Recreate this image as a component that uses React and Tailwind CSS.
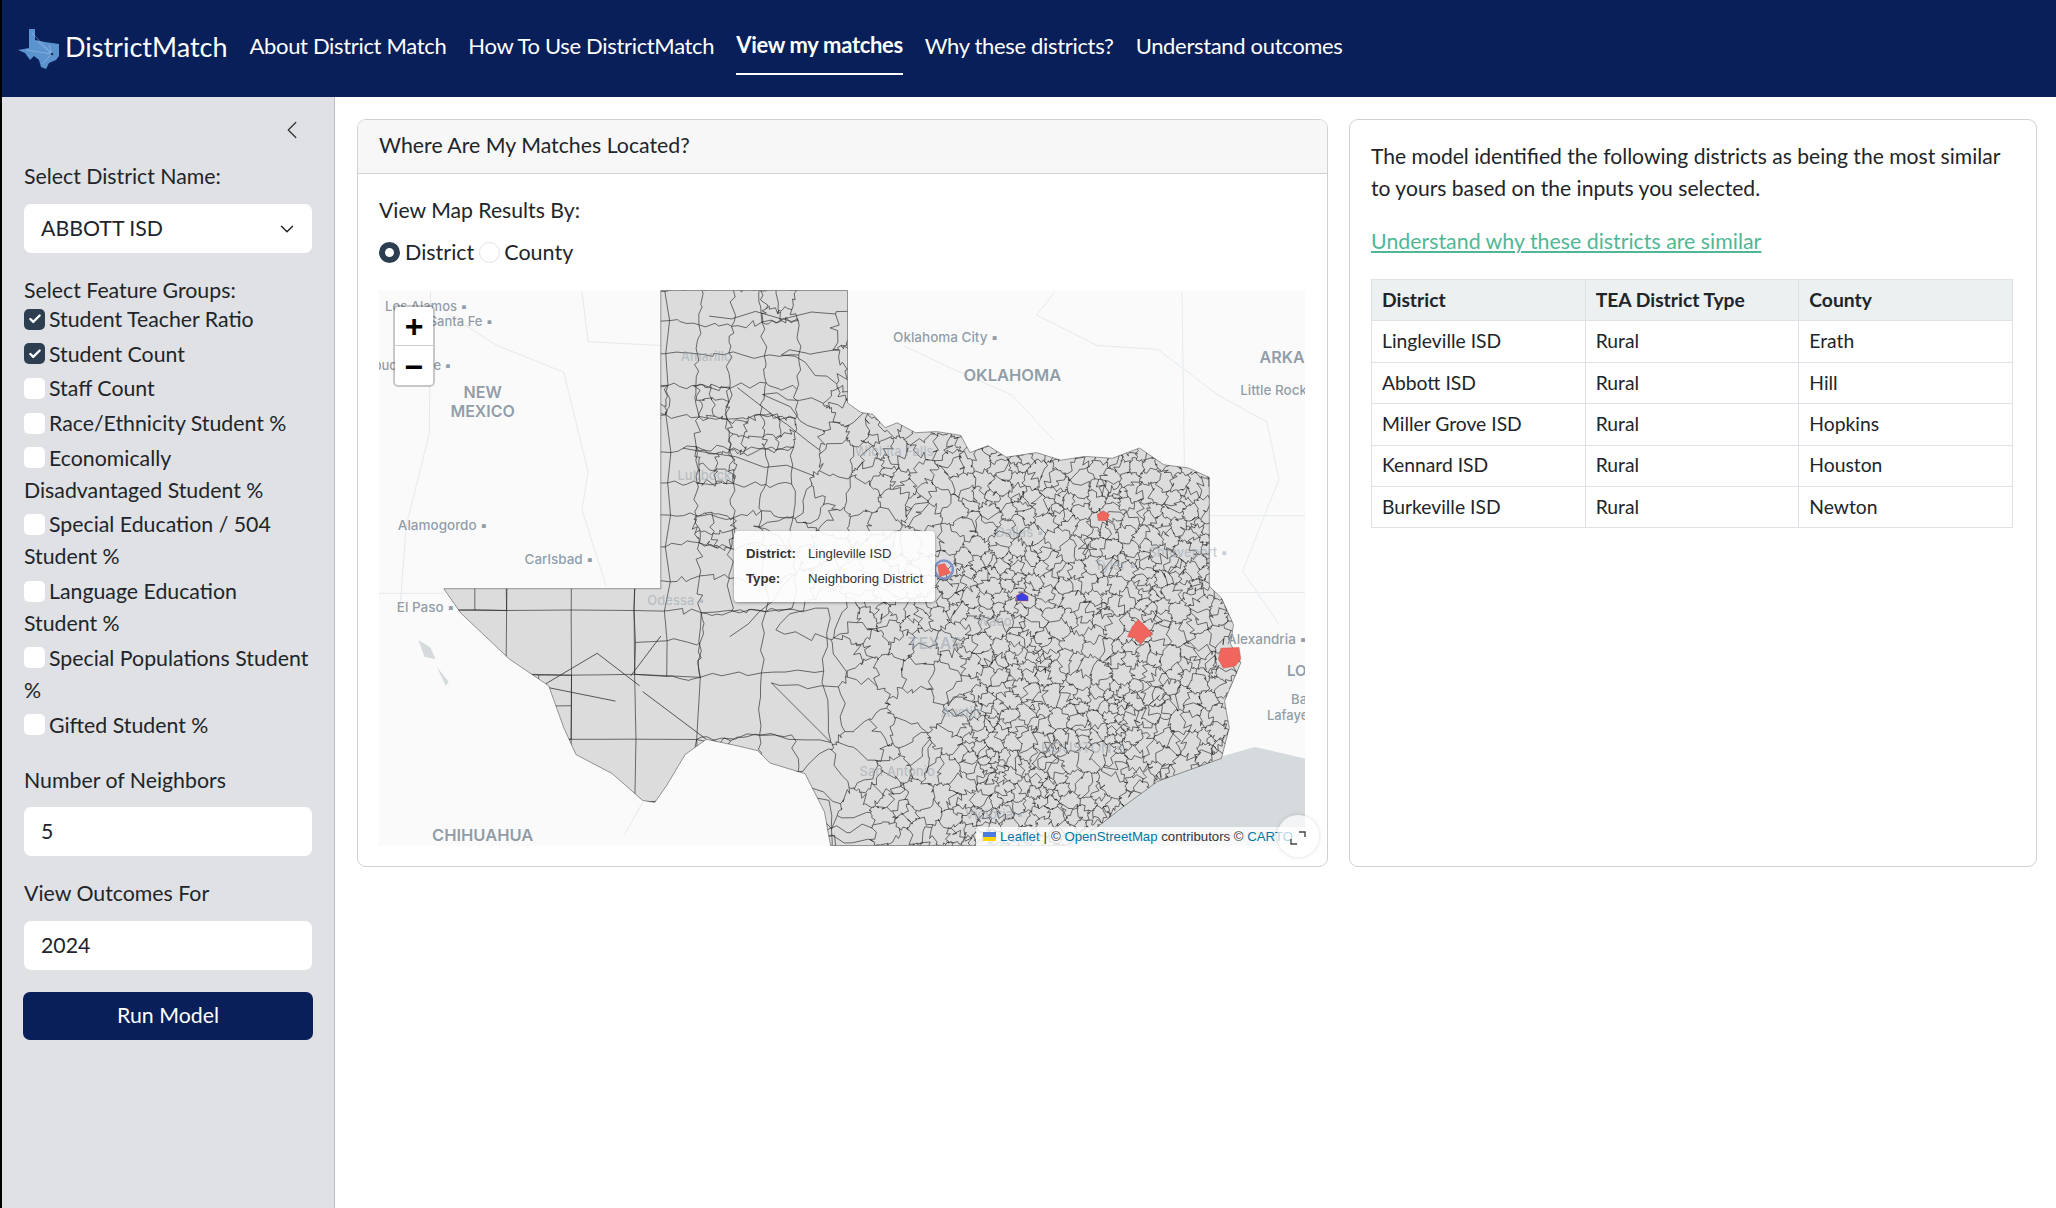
import React from 'react';
import { ChevronLeft, ChevronDown, Check } from 'lucide-react';

const navLinks = ['About District Match', 'How To Use DistrictMatch', 'View my matches', 'Why these districts?', 'Understand outcomes'];

const features = [
  { lines: ['Student Teacher Ratio'], checked: true },
  { lines: ['Student Count'], checked: true },
  { lines: ['Staff Count'] },
  { lines: ['Race/Ethnicity Student %'] },
  { lines: ['Economically', 'Disadvantaged Student %'] },
  { lines: ['Special Education / 504', 'Student %'] },
  { lines: ['Language Education', 'Student %'] },
  { lines: ['Special Populations Student', '%'] },
  { lines: ['Gifted Student %'] },
];

const rows = [
  ['Lingleville ISD', 'Rural', 'Erath'],
  ['Abbott ISD', 'Rural', 'Hill'],
  ['Miller Grove ISD', 'Rural', 'Hopkins'],
  ['Kennard ISD', 'Rural', 'Houston'],
  ['Burkeville ISD', 'Rural', 'Newton'],
];

// outlines were read off a crop of the map, so convert them to map pixels
const mx = (x) => (x - 15) / 1.65;
const my = (y) => (y - 26) / 2.616;
const toPts = (pts) => pts.map(([x, y]) => `${mx(x).toFixed(1)},${my(y).toFixed(1)}`).join(' ');

const texasOutline = [
  [480, 26], [788, 26], [788, 320], [810, 345], [830, 350], [850, 385], [870, 372], [900, 398], [935, 395], [975, 405], [990, 450], [1020, 432],
  [1050, 462], [1100, 450], [1140, 470], [1180, 460], [1225, 465], [1270, 438], [1310, 482], [1350, 490], [1385, 515], [1385, 800], [1405, 830], [1425, 900],
  [1420, 950], [1437, 1000], [1410, 1100], [1418, 1170], [1405, 1250], [1300, 1310], [1240, 1380], [1200, 1430], [1150, 1478], [760, 1478], [750, 1390],
  [718, 1290], [660, 1262], [640, 1230], [600, 1215], [555, 1200], [520, 1240], [490, 1320], [470, 1365], [450, 1360], [400, 1290], [340, 1240],
  [320, 1170], [295, 1060], [230, 990], [150, 870], [122, 806], [480, 806],
];

const hash = (a, b) => {
  const s = Math.sin(a * 12.9898 + b * 78.233) * 43758.5453;
  return s - Math.floor(s);
};

const targetSize = (x, y) => {
  if (x > 575) return 16;
  if (x > 470) return y > 370 && y < 440 ? 42 : 24;
  if (x > 270 && y < 310) return 32;
  return 60;
};

// half-plane clip of a convex cell
const clipCell = (poly, a, b, c) => {
  const out = [];
  for (let i = 0; i < poly.length; i++) {
    const p = poly[i];
    const q = poly[(i + 1) % poly.length];
    const dp = a * p[0] + b * p[1] - c;
    const dq = a * q[0] + b * q[1] - c;
    if (dp <= 0) out.push(p);
    if (dp * dq < 0) {
      const t = dp / (dp - dq);
      out.push([p[0] + (q[0] - p[0]) * t, p[1] + (q[1] - p[1]) * t]);
    }
  }
  return out;
};

const buildDistricts = () => {
  const leaves = [];
  const split = (x, y, s) => {
    const t = targetSize(x + s / 2, y + s / 2);
    if (s > (x < 416 ? 30 : 12) && s > t * (0.8 + hash(x, y) * 0.9)) {
      const h = s / 2;
      split(x, y, h);
      split(x + h, y, h);
      split(x, y + h, h);
      split(x + h, y + h, h);
    } else {
      leaves.push([x, y, s]);
    }
  };
  for (let x = 0; x < 960; x += 64) for (let y = 0; y < 576; y += 64) split(x, y, 64);

  const seen = new Set();
  let d = '';
  const edge = (ax, ay, bx, by, amp) => {
    const mxx = Math.round((ax + bx) / 2);
    const myy = Math.round((ay + by) / 2);
    const key = `${mxx},${myy}`;
    if (seen.has(key)) return;
    seen.add(key);
    const len = Math.hypot(bx - ax, by - ay);
    const w = Math.min(amp, len * 0.55);
    let path = `M${ax.toFixed(1)} ${ay.toFixed(1)}`;
    [0.2, 0.4, 0.6, 0.8].forEach((t, i) => {
      const ox = (hash(mxx + i, myy) - 0.5) * w;
      const oy = (hash(myy + i, mxx) - 0.5) * w;
      path += `L${(ax + (bx - ax) * t + ox).toFixed(1)} ${(ay + (by - ay) * t + oy).toFixed(1)}`;
    });
    d += `${path}L${bx.toFixed(1)} ${by.toFixed(1)}`;
  };

  const corner = (x, y) => {
    const j = x > 270 ? 4 : 1;
    return [x + (hash(x, y) - 0.5) * j * 2, y + (hash(y, x) - 0.5) * j * 2];
  };
  const seeds = [];
  leaves.forEach(([x, y, s]) => {
    if (x >= 416) {
      seeds.push([x + s * (hash(x, y) * 1.5 - 0.25), y + s * (hash(y, x) * 1.5 - 0.25), s]);
      return;
    }
    const amp = x > 270 ? 7 : 0;
    const [ax, ay] = corner(x, y);
    const [bx, by] = corner(x + s, y);
    const [cx, cy] = corner(x + s, y + s);
    const [ex, ey] = corner(x, y + s);
    edge(ax, ay, bx, by, amp);
    edge(ax, ay, ex, ey, amp);
    edge(bx, by, cx, cy, amp);
    edge(ex, ey, cx, cy, amp);
  });
  seeds.forEach((p) => {
    const r = p[2] * 2.5 + 40;
    let cell = [[p[0] - r, p[1] - r], [p[0] + r, p[1] - r], [p[0] + r, p[1] + r], [p[0] - r, p[1] + r]];
    seeds.forEach((q) => {
      if (q === p || Math.abs(q[0] - p[0]) > 2 * r || Math.abs(q[1] - p[1]) > 2 * r) return;
      const a = q[0] - p[0];
      const b = q[1] - p[1];
      cell = clipCell(cell, a, b, (q[0] * q[0] + q[1] * q[1] - p[0] * p[0] - p[1] * p[1]) / 2);
    });
    cell.forEach((v, i) => {
      const w = cell[(i + 1) % cell.length];
      if (v[0] < 414) return;
      edge(v[0], v[1], w[0], w[1], 10);
    });
  });
  return d;
};

const districtPath = buildDistricts();

const diagonals = [
  [[375, 975], [290, 1055]],
  [[375, 975], [445, 1060]],
  [[295, 1065], [405, 1100]],
  [[450, 1075], [555, 1200]],
  [[480, 930], [430, 1035]],
];

// x, y, text, font size, anchor, heavy
const labels = [
  [25, 67, 'Los Alamos ▪', 13, 'start'],
  [150, 106, 'Santa Fe ▪', 13],
  [60, 222, 'Albuquerque ▪', 13],
  [186, 292, 'NEW', 16, 'middle', true],
  [186, 343, 'MEXICO', 16, 'middle', true],
  [120, 640, 'Alamogordo ▪', 13.5],
  [312, 730, 'Carlsbad ▪', 13.5],
  [92, 854, 'El Paso ▪', 13.5],
  [950, 148, 'Oklahoma City ▪', 13.5],
  [1060, 248, 'OKLAHOMA', 16.5, 'middle', true],
  [1468, 200, 'ARKANSAS', 16, 'start', true],
  [1436, 287, 'Little Rock', 13.5, 'start'],
  [1480, 938, 'Alexandria ▪', 13.5],
  [1513, 1020, 'LOUISIANA', 15, 'start', true],
  [1520, 1097, 'Baton', 13, 'start'],
  [1480, 1138, 'Lafayette', 13, 'start'],
  [186, 1452, 'CHIHUAHUA', 16.5, 'middle', true],
  [555, 198, 'Amarillo', 13],
  [865, 448, 'Wichita Falls', 13],
  [552, 510, 'Lubbock', 13],
  [505, 838, 'Odessa ▪', 13],
  [1072, 660, 'Dallas ▪', 13],
  [1350, 712, 'Shreveport ▪', 13],
  [1230, 744, 'Tyler ▪', 13],
  [1030, 892, 'Waco', 13],
  [932, 948, 'TEXAS', 16, 'middle', true],
  [975, 1130, 'Austin', 13],
  [1175, 1222, 'HOUSTON ▪', 14],
  [870, 1285, 'San Antonio', 13],
  [1030, 1396, 'Victoria ▪', 13],
];

const rivers = [
  [[1130, 30], [1100, 90], [1200, 170], [1300, 180], [1400, 300], [1480, 370], [1500, 520], [1440, 760], [1500, 900]],
  [[880, 170], [960, 230], [1060, 300], [1130, 420]],
  [[350, 30], [360, 160], [480, 170]],
  [[130, 90], [210, 170], [320, 240], [360, 500], [350, 600], [390, 800]],
  [[100, 30], [98, 400], [60, 640], [50, 850]],
  [[1340, 30], [1345, 620]],
  [[15, 818], [122, 818]],
  [[1385, 615], [1543, 615]],
  [[1385, 816], [1543, 816]],
  [[450, 1365], [420, 1450]],
];

const lakes = [
  [[80, 940], [100, 960], [108, 990], [90, 985]],
  [[110, 1010], [130, 1050], [125, 1060]],
];

const shapes = [
  { fill: '#f0655c', pts: [[1200, 612], [1210, 602], [1220, 612], [1216, 628], [1202, 628]] },
  { fill: '#f0655c', pts: [[1268, 887], [1280, 905], [1292, 925], [1280, 935], [1272, 952], [1262, 935], [1250, 932], [1258, 905]] },
  { fill: '#f0655c', pts: [[1404, 962], [1434, 960], [1437, 990], [1428, 1008], [1408, 1014], [1400, 990]] },
  { fill: '#f0655c', pts: [[937, 745], [948, 740], [958, 765], [940, 775]] },
  { fill: '#3a3fe0', pts: [[1066, 825], [1076, 816], [1086, 826], [1086, 838], [1068, 838]] },
];

const isFaded = (x, y) => x > 480 && x < 1400 && y > 180 && y < 1420 && !(x > 800 && y < 300);

const TexasMap = () => (
  <svg viewBox="0 0 926 555" className="absolute inset-0 h-full w-full">
    <defs>
      <clipPath id="tx">
        <polygon points={toPts(texasOutline)} />
      </clipPath>
    </defs>
    <rect width="926" height="555" fill="#fafafa" />
    <polygon points={toPts([[1150, 1478], [1300, 1290], [1405, 1245], [1460, 1220], [1543, 1250], [1543, 1478]])} fill="#d5dadc" />
    {rivers.map((r, i) => (
      <polyline key={i} points={toPts(r)} fill="none" stroke="#e4eaee" strokeWidth="1" />
    ))}
    {lakes.map((r, i) => (
      <polygon key={i} points={toPts(r)} fill="#d5dadc" />
    ))}
    <polygon points={toPts(texasOutline)} fill="#dcdcdc" stroke="#555" strokeWidth="0.6" />
    <g clipPath="url(#tx)">
      <path d={districtPath} fill="none" stroke="#222" strokeWidth="0.7" strokeOpacity="0.9" />
      {diagonals.map((l, i) => (
        <polyline key={i} points={toPts(l)} fill="none" stroke="#333" strokeWidth="0.8" />
      ))}
    </g>
    <ellipse cx={mx(947)} cy={my(756)} rx="9" ry="9" fill="none" stroke="#7b93c9" strokeWidth="2.5" />
    {shapes.map((s, i) => (
      <polygon key={i} points={toPts(s.pts)} fill={s.fill} stroke="#c9544d" strokeWidth="0.5" />
    ))}
    {labels.map(([x, y, text, size, anchor, heavy], i) => (
      <text
        key={i}
        x={mx(x)}
        y={my(y) + size * 0.35}
        fontSize={size}
        fontWeight={heavy ? 600 : 500}
        textAnchor={anchor || 'middle'}
        fill="#8a97a3"
        fillOpacity={isFaded(x, y) ? 0.45 : 0.95}
        fontFamily="Inter, sans-serif"
      >
        {text}
      </text>
    ))}
  </svg>
);

const Logo = () => (
  <svg viewBox="0 0 42 40" className="h-10 w-[42px] shrink-0">
    <polygon
      points="11,0 17,0 17,11 27,13 41,15 41,27 38,31 31,34 28,40 23,38 21,31 16,27 12,31 7,24 0,21 11,19"
      fill="#5b93cf"
    />
    <g stroke="#a9c8e8" strokeWidth="0.5">
      <line x1="34" y1="25" x2="14" y2="4" />
      <line x1="34" y1="25" x2="19" y2="12" />
      <line x1="34" y1="25" x2="8" y2="21" />
      <line x1="34" y1="25" x2="24" y2="35" />
      <line x1="34" y1="25" x2="31" y2="16" />
    </g>
    <circle cx="34" cy="25" r="1.3" fill="#1c2f5f" />
  </svg>
);

const CheckRow = ({ lines, checked }) => (
  <div className="mb-[2.7px] text-[21.3px] leading-[32px]">
    {lines.map((line, i) => (
      <div key={line} className="flex items-center">
        {i === 0 && (
          <span
            className={`mr-[4px] flex h-[21px] w-[21px] shrink-0 items-center justify-center rounded-[5px] ${checked ? 'bg-[#2c3e50]' : 'bg-white'}`}
          >
            {checked && <Check size={14} strokeWidth={4} className="text-white" />}
          </span>
        )}
        {line}
      </div>
    ))}
  </div>
);

const Field = ({ children }) => (
  <div className="flex h-[49px] items-center justify-between rounded-[7px] bg-white pl-[17px] pr-[14px] text-[21.3px] text-[#212529]">{children}</div>
);

const App = () => (
  <div className="min-h-[1208px] border-l-2 border-black bg-white font-['Lato',sans-serif] text-[#212529]">
    <nav className="flex h-[97px] items-center bg-[#081f59] pl-[16px] text-white">
      <Logo />
      <span className="mb-[3px] ml-[5px] mr-[22px] text-[27px]">DistrictMatch</span>
      <div className="flex h-full gap-[22px] text-[22px] tracking-[-0.33px]">
        {navLinks.map((link, i) => (
          <a
            key={link}
            className={`flex h-[75px] items-center pt-[16px] ${i === 2 ? 'border-b-2 border-white font-bold' : ''}`}
          >
            {link}
          </a>
        ))}
      </div>
    </nav>
    <div className="flex min-h-[1111px]">
      <aside className="flex w-[333px] shrink-0 flex-col border-r border-[#b9bcc1] bg-[#dfe1e5] px-[22px]">
        <div className="flex h-[63px] items-start justify-end pr-[5px] pt-[18px]">
          <ChevronLeft size={30} strokeWidth={1} className="text-[#333]" />
        </div>
        <div className="text-[21.3px] leading-[32px]">Select District Name:</div>
        <div className="mt-[12px]">
          <Field>
            ABBOTT ISD
            <ChevronDown size={22} strokeWidth={1.6} />
          </Field>
        </div>
        <div className="mt-[23px] text-[21.3px] leading-[28px]">Select Feature Groups:</div>
        <div className="-mt-[1px]">
          {features.map((f) => (
            <CheckRow key={f.lines[0]} {...f} />
          ))}
        </div>
        <div className="mt-[21px] text-[21.3px] leading-[32px]">Number of Neighbors</div>
        <div className="mt-[11px]">
          <Field>5</Field>
        </div>
        <div className="mt-[21px] text-[21.3px] leading-[32px]">View Outcomes For</div>
        <div className="mt-[12px]">
          <Field>2024</Field>
        </div>
        <button className="-mx-[1px] mt-[22px] h-[48px] rounded-[7px] bg-[#081f59] text-[21.3px] text-white">Run Model</button>
      </aside>
      <main className="flex flex-1 items-start gap-[21px] pl-[22px] pr-[20px] pt-[22px]">
        <section className="h-[748px] w-[971px] shrink-0 overflow-hidden rounded-[9px] border border-[#cfd1d3]">
          <div className="flex h-[54px] items-center border-b border-[#cfd1d3] bg-[#f7f7f7] px-[21px] pb-[2px] text-[21.3px]">
            Where Are My Matches Located?
          </div>
          <div className="px-[21px]">
            <div className="mt-[20px] text-[21.2px] leading-[32px]">View Map Results By:</div>
            <div className="mt-[10px] flex h-[32px] items-center text-[21.5px]">
              <span className="mr-[5px] h-[21px] w-[21px] rounded-full border-[6px] border-[#2c3e50] bg-white" />
              District
              <span className="ml-[5px] mr-[4px] h-[21px] w-[21px] rounded-full border border-[#dfe2e6] bg-white" />
              County
            </div>
            <div className="relative mt-[22px] h-[556px] w-[926px] overflow-hidden">
              <TexasMap />
              <div className="absolute left-[14px] top-[15px] w-[42px] overflow-hidden rounded-[5px] border-2 border-[#00000033] bg-white bg-clip-padding font-['Liberation_Sans',sans-serif] text-black">
                <div className="flex h-[39px] items-center justify-center border-b border-[#ccc] text-[32px] font-bold leading-none">+</div>
                <div className="flex h-[39px] items-center justify-center pt-[2px] text-[32px] font-bold leading-none">−</div>
              </div>
              <div className="absolute left-[355px] top-[241px] h-[71px] w-[201px] whitespace-nowrap rounded-[4px] bg-white/90 px-[12px] py-[14px] font-['Liberation_Sans',sans-serif] text-[13.2px] leading-[25px] text-[#333] shadow-[0_1px_3px_rgba(0,0,0,0.4)]">
                <div className="-mt-[4px] flex">
                  <b className="w-[62px] shrink-0">District:</b>
                  <span>Lingleville ISD</span>
                </div>
                <div className="flex">
                  <b className="w-[62px] shrink-0">Type:</b>
                  <span>Neighboring District</span>
                </div>
              </div>
              <div className="absolute bottom-0 right-0 flex h-[19px] w-[329px] items-center whitespace-nowrap bg-white/80 pl-[7px] font-['Liberation_Sans',sans-serif] text-[13.2px] text-[#333]">
                <span className="mr-[4px] inline-flex h-[9px] w-[13px] flex-col">
                  <span className="h-1/2 bg-[#4c7be1]" />
                  <span className="h-1/2 bg-[#ffd500]" />
                </span>
                <a className="text-[#0078a8]">Leaflet</a>
                <span className="mx-[4px]">|</span>
                ©&nbsp;<a className="text-[#0078a8]">OpenStreetMap</a>&nbsp;contributors ©&nbsp;<a className="text-[#0078a8]">CARTO</a>
              </div>
            </div>
          </div>
        </section>
        <section className="relative h-[748px] w-[688px] shrink-0 rounded-[9px] border border-[#cfd1d3] px-[21px] pt-[20px]">
          <p className="text-[21.1px] leading-[32px]">
            The model identified the following districts as being the most similar
            <br />
            to yours based on the inputs you selected.
          </p>
          <a className="mt-[21px] block text-[21.35px] leading-[32px] text-[#4fb795] underline">Understand why these districts are similar</a>
          <table className="mt-[22px] w-[642px] table-fixed border-collapse text-[19.3px]">
            <thead>
              <tr className="h-[41.4px] bg-[#ecf0f1] font-bold">
                {['District', 'TEA District Type', 'County'].map((h) => (
                  <th key={h} className="border border-[#dee2e6] px-[10px] text-left font-bold">
                    {h}
                  </th>
                ))}
              </tr>
            </thead>
            <tbody>
              {rows.map((row) => (
                <tr key={row[0]} className="h-[41.4px]">
                  {row.map((cell, i) => (
                    <td key={i} className="border border-[#dee2e6] px-[10px]">
                      {cell}
                    </td>
                  ))}
                </tr>
              ))}
            </tbody>
          </table>
        </section>
        <div className="absolute left-[1277px] top-[815px] flex h-[42px] w-[42px] items-center justify-center rounded-full bg-white/70 pt-[4px] shadow-[0_0_4px_rgba(0,0,0,0.15)]">
          <svg viewBox="0 0 16 14" className="h-[14px] w-4" fill="none" strokeWidth="1.4">
            <path d="M9 1h6v5" stroke="#444" />
            <path d="M1 8v5h6" stroke="#444" />
          </svg>
        </div>
      </main>
    </div>
  </div>
);

export default App;
